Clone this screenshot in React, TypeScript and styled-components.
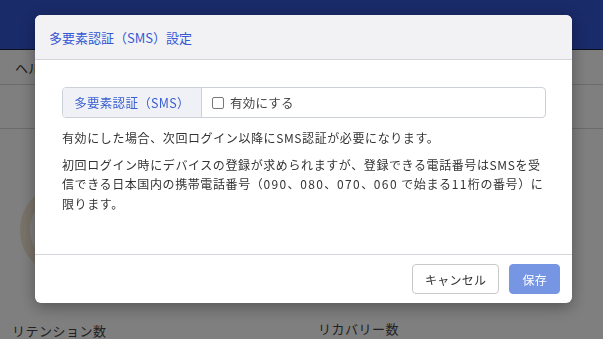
import * as React from 'react';
import styled, { createGlobalStyle } from 'styled-components';

const GlobalStyle = createGlobalStyle`
	html, body {
		margin: 0;
		padding: 0;
		background: #ffffff;
		font-family: 'Noto Sans CJK JP', 'Noto Sans', sans-serif;
		color: #333333;
	}
	* {
		box-sizing: border-box;
	}
`;

const Page = styled.div`
	width: 603px;
	height: 339px;
	overflow: hidden;
	background: #ffffff;
`;

const TopBar = styled.header`
	height: 50px;
	background: #3456d4;
	border-bottom: 1px solid #1b2140;
`;

const SubNav = styled.nav`
	height: 35px;
	display: flex;
	align-items: center;
	padding-left: 15px;
	font-size: 13px;
	color: #333;
	border-bottom: 1px solid #d6d6d6;
`;

const Toolbar = styled.div`
	height: 44px;
	border-bottom: 1px solid #d6d6d6;
`;

const Content = styled.div`
	display: grid;
	grid-template-columns: 306px 1fr;
	padding: 0 12px;
`;

const Card = styled.div<{ $top: number }>`
	display: flex;
	flex-direction: column;
	gap: 46px;
	padding-top: ${(p) => p.$top}px;
`;

const Donut = styled.div`
	width: 92px;
	height: 92px;
	margin-left: 8px;
	border-radius: 50%;
	border: 10px solid #f4e6d4;
`;

const CardTitle = styled.div`
	font-size: 13px;
	line-height: 18px;
	letter-spacing: 0.5px;
	color: #444;
`;

const Overlay = styled.div`
	position: fixed;
	inset: 0;
	background: rgba(0, 0, 0, 0.5);
	padding: 15px 0 0 35px;
`;

const Modal = styled.div`
	width: 537px;
	height: 288px;
	background: #ffffff;
	border-radius: 6px;
	overflow: hidden;
	display: flex;
	flex-direction: column;
	box-shadow: 0 4px 16px rgba(0, 0, 0, 0.35);
`;

const ModalHeader = styled.div`
	height: 45px;
	flex-shrink: 0;
	display: flex;
	align-items: center;
	padding-left: 14px;
	background: #f2f2f5;
	border-bottom: 1px solid #d5d6dc;
	color: #3558d4;
	font-size: 13px;
`;

const ModalBody = styled.div`
	flex: 1;
	padding: 27px 26px 0 27px;
`;

const InputGroup = styled.div`
	display: flex;
	height: 31px;
	border: 1px solid #ccd0d8;
	border-radius: 4px;
	overflow: hidden;
`;

const GroupLabel = styled.div`
	width: 139px;
	display: flex;
	align-items: center;
	justify-content: center;
	background: #eff1f6;
	border-right: 1px solid #ccd0d8;
	color: #3a5fd0;
	font-size: 12.5px;
	letter-spacing: 0.3px;
`;

const CheckLabel = styled.label`
	display: flex;
	align-items: center;
	gap: 6px;
	padding-left: 10px;
	font-size: 12.5px;
	letter-spacing: 0.2px;
	color: #444;
`;

const CheckBox = styled.span`
	width: 12px;
	height: 12px;
	border: 1px solid #777;
	border-radius: 2px;
	background: #fff;
`;

const Note = styled.p<{ $gap: number }>`
	margin: ${(p) => p.$gap}px 0 0;
	font-size: 12px;
	line-height: 19.5px;
	letter-spacing: 0.6px;
	color: #333;
`;

const Digits = styled.span`
	letter-spacing: 1.4px;
`;

const ModalFooter = styled.div`
	height: 49px;
	flex-shrink: 0;
	display: flex;
	align-items: center;
	justify-content: flex-end;
	gap: 10px;
	padding-right: 12px;
	border-top: 1px solid #d5d6dc;
`;

const Button = styled.button<{ $primary?: boolean }>`
	height: 30px;
	padding: 0 12px;
	border-radius: 4px;
	font-family: inherit;
	font-size: 12px;
	letter-spacing: 0.3px;
	border: 1px solid ${(p) => (p.$primary ? '#7695e3' : '#c9c9c9')};
	background: ${(p) => (p.$primary ? '#7695e3' : '#ffffff')};
	color: ${(p) => (p.$primary ? '#ffffff' : '#333333')};
`;

const App: React.FunctionComponent = () => {
	return (
		<Page>
			<GlobalStyle />
			<TopBar />
			<SubNav>ヘルプ</SubNav>
			<Toolbar />
			<Content>
				<Card $top={55}>
					<Donut />
					<CardTitle>リテンション数</CardTitle>
				</Card>
				<Card $top={191}>
					<CardTitle>リカバリー数</CardTitle>
				</Card>
			</Content>
			<Overlay>
				<Modal>
					<ModalHeader>多要素認証（SMS）設定</ModalHeader>
					<ModalBody>
						<InputGroup>
							<GroupLabel>多要素認証（SMS）</GroupLabel>
							<CheckLabel>
								<CheckBox />
								有効にする
							</CheckLabel>
						</InputGroup>
						<Note $gap={10}>
							有効にした場合、次回ログイン以降にSMS認証が必要になります。
						</Note>
						<Note $gap={7}>
							初回ログイン時にデバイスの登録が求められますが、登録できる電話番号はSMSを受信できる日本国内の携帯電話番号（
							<Digits>090</Digits>、<Digits>080</Digits>、<Digits>070</Digits>、
							<Digits>060</Digits> で始まる<Digits>11</Digits>桁の番号）に
							<br />
							限ります。
						</Note>
					</ModalBody>
					<ModalFooter>
						<Button>キャンセル</Button>
						<Button $primary>保存</Button>
					</ModalFooter>
				</Modal>
			</Overlay>
		</Page>
	);
};

export default App;
